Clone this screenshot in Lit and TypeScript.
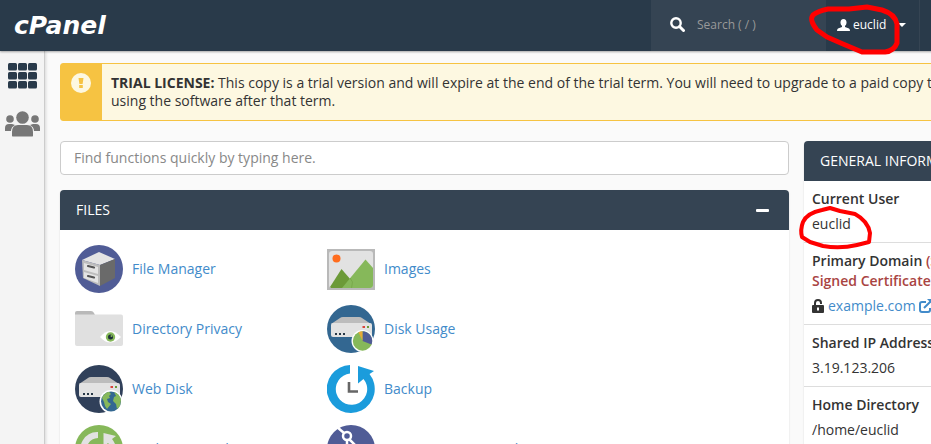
import { LitElement, html, css, svg } from "lit";
import { customElement, state } from "lit/decorators.js";

const cabinet = svg`
  <circle cx="24" cy="24" r="24" fill="#505c96"/>
  <path d="M7 15 24 7 40 14 25 20Z" fill="#e4e4e4"/>
  <path d="M7 15 25 20V41L8 33Z" fill="#bdbdbd"/>
  <path d="M25 20 40 14V33L25 41Z" fill="#6a6a6a"/>
  <path d="M9 18 23 22V29L9 25ZM9 27 23 31V38L9 33Z" fill="#e4e4e4"/>
  <path d="m13 21 6 1.5M13 31l6 1.5" stroke="#555" stroke-width="2.2" stroke-linecap="round"/>`;

const picture = svg`
  <path d="M0 4H48V45H0Z" fill="#b9b9b9"/>
  <rect x="2" y="6" width="44" height="37" rx="3" fill="#e2e2e2"/>
  <circle cx="9.500" cy="13.500" r="4" fill="#ff6c1e"/>
  <path d="M3 42 14.500 24 24 35 19 43H4Z" fill="#6c9a38"/>
  <path d="M15 43 38.500 14.500 46 23V40Q46 43 43 43Z" fill="#86b85a"/>
  <path d="m23 33 2.500 4-1 6" fill="none" stroke="#79aa4c"/>`;

const folder = svg`
  <path d="M0 12V8Q0 6 2 6H16Q18 6 19 8L21 12Z" fill="#b9b9b9"/>
  <path d="M0 9.500H46Q48 9.500 48 11.500V39Q48 41 46 41H2Q0 41 0 39Z" fill="#e0e0e0"/>
  <path d="M25 32Q35 20 46 32 35 43 25 32Z" fill="#fff"/>
  <circle cx="35.500" cy="32" r="4.700" fill="#86b85a"/>
  <circle cx="35.500" cy="32" r="2.500" fill="#1c2f38"/>
  <circle cx="36.500" cy="31" r="1" fill="#86b85a"/>`;

const drive = svg`
  <path d="M4 19 13 13Q14 12 16 12H32Q34 12 35 13L44 19Z" fill="#bcbcbc"/>
  <rect x="4" y="18" width="41" height="14" rx="2" fill="#e2e2e2"/>
  <path d="M8 28h2v2H8zM12 28h2v2h-2zM16 28h2v2h-2z" fill="#263746"/>
  <path d="M35.500 21h2.500v2h-2.500z" fill="#d9423a"/>
  <path d="M40 21h2v2h-2z" fill="#6c9a38"/>`;

const usage = svg`
  <circle cx="24" cy="24" r="24" fill="#336791"/>${drive}
  <circle cx="35.500" cy="36" r="11" fill="#fff"/>
  <circle cx="35.500" cy="36" r="9.700" fill="#86b85a"/>
  <path d="M35.500 36V26.300A9.700 9.700 0 0 1 44.500 39.600Z" fill="#505c96"/>
  <path d="M35.500 36 31.500 27.200A9.700 9.700 0 0 1 35.500 26.300Z" fill="#e8a838"/>`;

const webDisk = svg`
  <circle cx="24" cy="24" r="24" fill="#30405a"/>${drive}
  <circle cx="36" cy="36.500" r="11.500" fill="#fff"/>
  <circle cx="36" cy="36.500" r="10" fill="#336791"/>
  <path d="M27 33Q29 28 34 26.800L36 29 34 31 35 33 32 34 33 37 36 39 32 44 30 41 29 37Z" fill="#86b85a"/>
  <path d="M39 27Q45 29 46 35L45 41 42 44 41 39 38 36 39 32 41 31Z" fill="#86b85a"/>`;

const backup = svg`
  <path d="M23 0V8.500A15.700 15.700 0 1 0 36.500 14L31 18.500V1L47 6 42.500 9A24 24 0 1 1 23 0Z" fill="#1b9cdc"/>
  <path d="M22 17V26.500H31" fill="none" stroke="#666" stroke-width="2.600"/>`;

const wizard = svg`
  <circle cx="24" cy="24" r="24" fill="#86b85a"/>
  <path d="M23 7V13A11.500 11.500 0 0 0 13 30L8 33A17 17 0 0 1 23 7Z" fill="#e2e2e2"/>
  <path d="M28.500 8 41 11 37 14Q43 21 40 31L35 28Q37 22 33 18L28.500 22Z" fill="#e2e2e2"/>`;

const git = svg`
  <circle cx="24" cy="24" r="24" fill="#505c96"/>
  <path d="M10 2 17 8M22 14 38 30M20 15V36" stroke="#fff" stroke-width="2.500"/>
  <circle cx="20" cy="11" r="4" fill="none" stroke="#fff" stroke-width="2.500"/>`;

const tools = [
  ["File Manager", cabinet], ["Images", picture],
  ["Directory Privacy", folder], ["Disk Usage", usage],
  ["Web Disk", webDisk], ["Backup", backup],
  ["Backup Wizard", wizard], ["Git™ Version Control", git],
] as const;

@customElement("app-root")
export class AppRoot extends LitElement {
  @state() private open = true;

  static styles = css`
    :host { display: block; position: relative; height: 100vh; overflow: hidden; background: #fafafa; color: #333; font: 14px/20px "Open Sans", "Noto Sans", sans-serif; }
    * { box-sizing: border-box; }
    a { color: #428bca; text-decoration: none; }
    button, input { font: inherit; }
    svg { display: block; flex: none; }
    h2, dl, dt, dd, ul, p { margin: 0; padding: 0; }
    .page { min-width: 1050px; min-height: 100%; display: flex; flex-direction: column; }
    header { display: flex; height: 51px; background: #293a4a; box-shadow: 0 1px 2px #0005; z-index: 1; }
    .brand { flex: 1; padding-left: 14px; color: #fff; font: italic 700 25px/52px "DejaVu Sans", sans-serif; }
    .find { display: flex; align-items: center; width: 175px; padding: 0 0 2px 19px; gap: 12px; background: #354453; }
    .find input { width: 112px; border: 0; padding: 0; background: none; color: #fff; font-size: 12px; outline: 0; }
    .find input::placeholder { color: #999; opacity: 1; }
    .account { display: flex; align-items: center; width: 93px; padding: 0 0 2px 11px; gap: 3px; border: 0; color: #fff; background: none; font-size: 12px; }
    .caret { margin-left: 9px; }
    .rest { width: 131px; border-left: 1px solid #354453; }
    .body { flex: 1; display: flex; }
    nav { display: flex; flex-direction: column; align-items: center; gap: 22px; width: 45px; padding-top: 12px; background: #f4f4f4; border-right: 1px solid #ccc; box-shadow: 1px 0 3px #0002; }
    main { flex: 1; padding: 12px 16px 0 15px; }
    .alert { display: flex; height: 58px; border: 1px solid #f6c342; border-radius: 3px; background: #fdf8e1; line-height: 18px; }
    .sign { width: 41px; padding: 9px 10px; background: #f6c342; }
    .alert p { padding: 10px 9px; flex: 1; }
    .columns { display: flex; align-items: flex-start; gap: 15px; margin-top: 20px; }
    .left { flex: 1; }
    .quick { display: block; width: 100%; height: 34px; padding: 0 13px 2px; border: 1px solid #ccc; border-radius: 4px; background: #fff; outline: 0; }
    .quick::placeholder { color: #888; opacity: 1; }
    .panel { border-radius: 4px; background: #fff; box-shadow: 0 1px 2px #0002; overflow: hidden; }
    .files { margin-top: 15px; }
    .aside { width: 230px; }
    h2 { display: flex; align-items: center; justify-content: space-between; height: 40px; padding: 0 16px; background: #354453; color: #fff; font-size: 14px; font-weight: 400; white-space: nowrap; }
    .fold { padding: 4px; border: 0; background: none; }
    .tools { display: grid; grid-template-columns: 252px 252px; grid-auto-rows: 60px; padding: 9px 15px; list-style: none; }
    .tools a { display: flex; align-items: center; gap: 9px; height: 60px; }
    .fact { padding: 8px; border-bottom: 1px solid #ddd; white-space: nowrap; }
    dt { font-weight: 600; }
    dd { display: flex; align-items: center; gap: 3px; margin-top: 5px; }
    .warn { color: #a94442; }
    .marks { position: absolute; left: 0; top: 0; z-index: 2; pointer-events: none; }
  `;

  render() {
    return html`
      <div class="page">
        <header>
          <div class="brand">cPanel</div>
          <label class="find">
            <svg width="15" height="15" viewBox="0 0 15 15" fill="none" stroke="#fff"><circle cx="6" cy="6" r="4.700" stroke-width="2.400"/><path d="m9.500 9.500 4 4" stroke-width="3" stroke-linecap="round"/></svg>
            <input aria-label="Search" placeholder="Search ( / )">
          </label>
          <button class="account">
            <svg width="13" height="12" viewBox="0 0 13 12" fill="#fff"><ellipse cx="6.500" cy="3.500" rx="3" ry="3.500"/><path d="M5 6h3v2l4 1.500q1 .5 1 2.500H0q0-2 1-2.500L5 8Z"/></svg>
            euclid
            <svg class="caret" width="8" height="4" viewBox="0 0 8 4"><path d="M0 0h8L4 4Z" fill="#fff"/></svg>
          </button>
          <div class="rest"></div>
        </header>
        <div class="body">
          <nav>
            <a href="#tools" aria-label="Tools"><svg width="29" height="26" viewBox="0 0 29 26" fill="#293a4a">
              ${[0, 10, 20].map((x) => [0, 9, 18].map((y) => svg`<rect x=${x} y=${y} width="9" height="7.500" rx="1.500"/>`))}
            </svg></a>
            <a href="#users" aria-label="User manager"><svg width="35" height="26" viewBox="0 0 35 26" fill="#777">
              <circle cx="17.500" cy="6.500" r="6.300"/><circle cx="5" cy="8" r="3.800"/><circle cx="30" cy="8" r="3.800"/>
              <path d="M7 25V21Q7 14 13 14H22Q28 14 28 21V25Q28 25.500 26 25.500H9Q7 25.500 7 25ZM0 20V17Q0 13 4 13H7L10 14Q6 16 6 20ZM35 20V17Q35 13 31 13H28L25 14Q29 16 29 20Z"/>
            </svg></a>
          </nav>
          <main>
            <div class="alert" role="alert">
              <div class="sign"><svg width="20" height="20" viewBox="0 0 20 20"><circle cx="10" cy="10" r="10" fill="#fdf8e1"/><path d="M7.500 5h5l-.9 6H8.400ZM8.200 12h3.600V15H8.200Z" fill="#f6c342"/></svg></div>
              <p><b>TRIAL LICENSE:</b> This copy is a trial version and will expire at the end of the trial term. You will need to upgrade to a paid copy to continue using the software after that term.</p>
            </div>
            <div class="columns">
              <div class="left">
                <input class="quick" aria-label="Find functions" placeholder="Find functions quickly by typing here.">
                <section class="panel files">
                  <h2>FILES
                    <button class="fold" aria-label="Toggle files" @click=${() => (this.open = !this.open)}>
                      <svg width="13" height="3" viewBox="0 0 13 3"><rect width="13" height="3" rx="1" fill="#fff"/></svg>
                    </button>
                  </h2>
                  ${this.open ? html`<ul class="tools">${tools.map(([name, art]) => html`
                    <li><a href="#tool"><svg width="48" height="48" viewBox="0 0 48 48">${art}</svg>${name}</a></li>`)}</ul>` : ""}
                </section>
              </div>
              <section class="panel aside">
                <h2>GENERAL INFORMATION</h2>
                <dl>
                  <div class="fact"><dt>Current User</dt><dd>euclid</dd></div>
                  <div class="fact">
                    <dt>Primary Domain <span class="warn">(Self<br>Signed Certificate)</span></dt>
                    <dd>
                      <svg width="13" height="14" viewBox="0 0 13 14"><path d="M3 7V4a3 3 0 0 1 6 0v1" fill="none" stroke="#333" stroke-width="2"/><rect y="6" width="12" height="8" rx="1" fill="#333"/><path d="M5 8.500h2v3H5z" fill="#fff"/></svg>
                      <a href="#domain">example.com</a>
                      <svg width="14" height="14" viewBox="0 0 14 14" fill="none" stroke="#428bca" stroke-width="2"><path d="M7 3H3Q1 3 1 5v6q0 2 2 2h6q2 0 2-2V9M5 9l7-7"/><path d="M8 0h6v6Z" fill="#428bca" stroke="none"/></svg>
                    </dd>
                  </div>
                  <div class="fact"><dt>Shared IP Address</dt><dd>3.19.123.206</dd></div>
                  <div class="fact"><dt>Home Directory</dt><dd>/home/euclid</dd></div>
                </dl>
              </section>
            </div>
          </main>
        </div>
      </div>
      <svg class="marks" width="931" height="260" viewBox="0 0 931 260" fill="none" stroke="#f00" stroke-linejoin="round" aria-hidden="true">
        <path stroke-width="5" d="M828 9H849L867 7 882 10Q895 14 897 24V43Q894 51 885 52H862L843 44 827 37 817 30Q809 20 813 15 818 11 828 9Z"/>
        <path stroke-width="4" d="M822 210Q807 213 803 222 800 230 802 237L810 242 823 246Q840 249 857 245L869 242 870 233Q868 221 855 214L840 211 830 208 822 210Z"/>
      </svg>`;
  }
}
